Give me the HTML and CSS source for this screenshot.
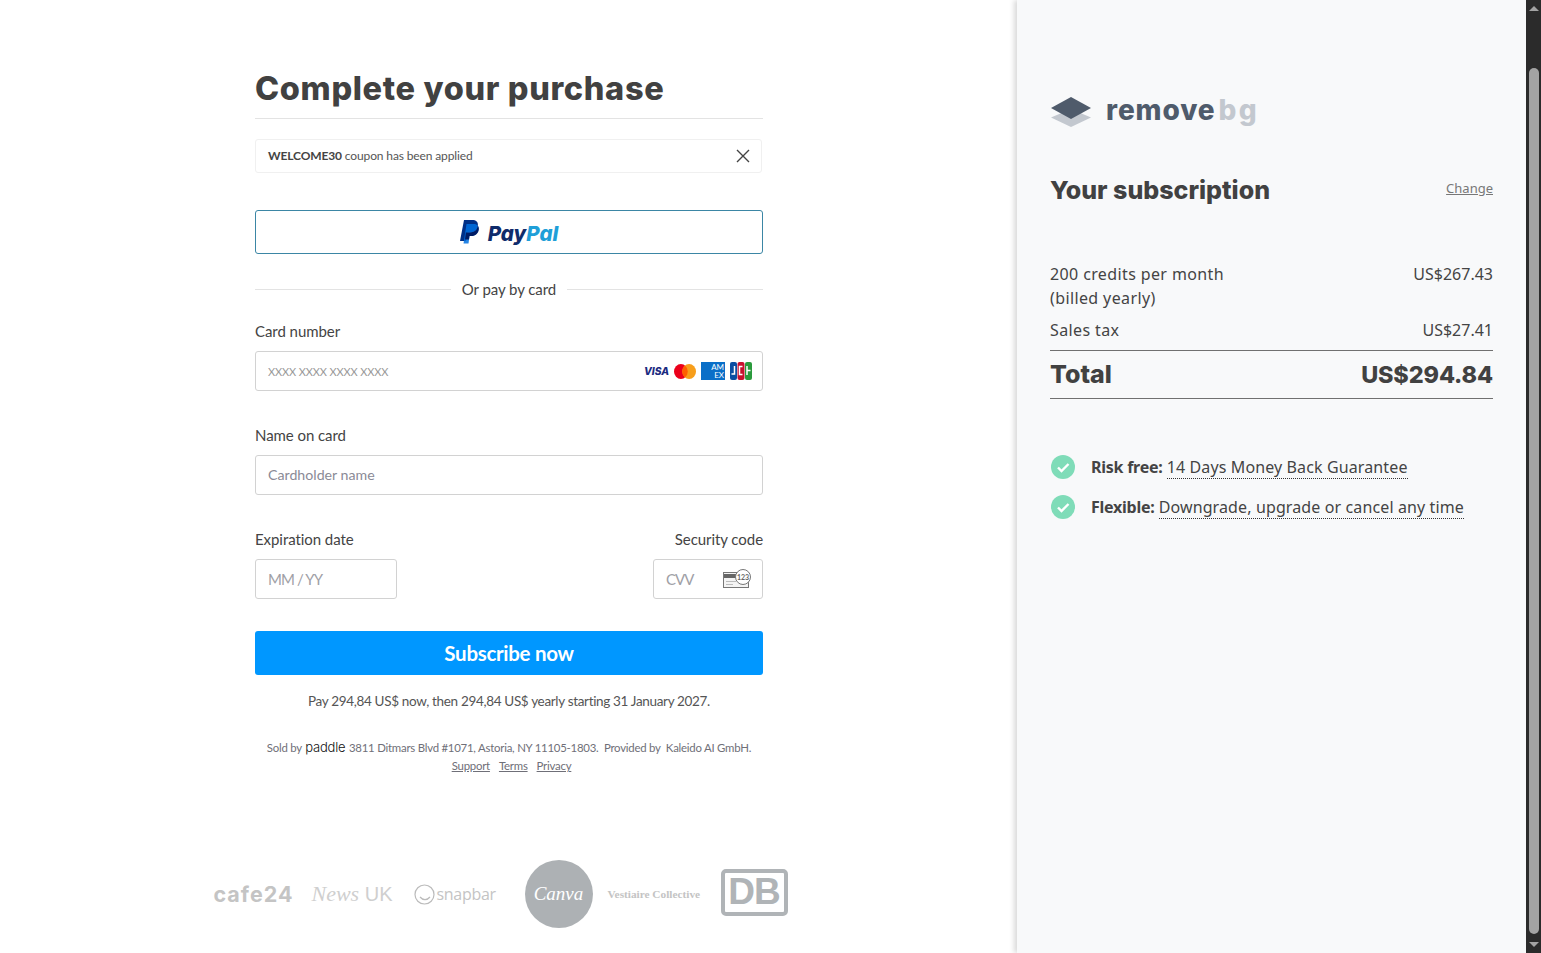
FILE: index.html
```html
<!DOCTYPE html>
<html lang="en">

<head>
    <meta charset="UTF-8">
    <title>Complete your purchase</title>
    <link rel="stylesheet" href="styles.css">
</head>

<body>
    <div class="page">
        <main class="checkout">
            <div class="form-col">
                <h1>Complete your purchase</h1>

                <div class="coupon">
                    <span><b>WELCOME30</b> coupon has been applied</span>
                    <svg class="coupon-close" width="14" height="14" viewBox="0 0 14 14">
                        <path d="M1 1L13 13M13 1L1 13" stroke="#444" stroke-width="1.4" fill="none" />
                    </svg>
                </div>

                <button class="paypal">
                    <svg width="20" height="24" viewBox="0 0 20 24">
                        <path d="M4 0h8c4 0 6.500 2 5.800 5.800C17 10.500 14 12.500 10 12.500H7.500L6 21H0z" fill="#003087" />
                        <path d="M6.500 4h7c3.500 0 5.500 2 5 5.500C18 13.500 15 16 11.500 16H9.500L8.500 23.500H3.500z" fill="#0070e0" opacity="0.85" />
                        <path d="M5.900 12.500h4.100c4 0 7-2 7.800-6.700.8 1 1.200 2.200 1 3.700-.5 4-3.500 6.500-7.300 6.500H9.500l-.5 3.500H5z" fill="#001c64" />
                    </svg>
                    <span class="paypal-word"><span class="pay">Pay</span><span class="pal">Pal</span></span>
                </button>

                <div class="divider"><span>Or pay by card</span></div>

                <div class="field">
                    <label>Card number</label>
                    <div class="input card-input">
                        <span class="ph ph-small">XXXX XXXX XXXX XXXX</span>
                        <div class="card-logos">
                            <span class="visa">VISA</span>
                            <svg width="22" height="15" viewBox="0 0 24 15" preserveAspectRatio="none">
                                <circle cx="7.500" cy="7.500" r="7.500" fill="#eb001b" />
                                <circle cx="16.500" cy="7.500" r="7.500" fill="#f79e1b" />
                                <path d="M12 1.500a7.500 7.500 0 0 1 0 12a7.500 7.500 0 0 1 0-12z" fill="#ff5f00" />
                            </svg>
                            <span class="amex">AM<br>EX</span>
                            <svg width="22" height="18" viewBox="0 0 22 18">
                                <rect x="0" y="0" width="7" height="18" rx="2" fill="#0b4ea2" />
                                <rect x="7.500" y="0" width="7" height="18" rx="2" fill="#c8102e" />
                                <rect x="15" y="0" width="7" height="18" rx="2" fill="#2a9a3c" />
                                <path d="M4.500 4v8H1.500M12.500 4.500H9.500v8H12.500M17 4v9M17 8.500h3.500" stroke="#fff" stroke-width="1.500" fill="none" />
                            </svg>
                        </div>
                    </div>
                </div>

                <div class="field">
                    <label>Name on card</label>
                    <div class="input"><span class="ph">Cardholder name</span></div>
                </div>

                <div class="field-row">
                    <div class="field expiry">
                        <label>Expiration date</label>
                        <div class="input"><span class="ph ph-dim">MM / YY</span></div>
                    </div>
                    <div class="field cvv">
                        <label>Security code</label>
                        <div class="input cvv-input">
                            <span class="ph ph-dim">CVV</span>
                            <svg width="28" height="20" viewBox="0 0 28 20">
                                <rect x="0.500" y="3.500" width="25" height="15" fill="#f4f4f4" stroke="#777" />
                                <rect x="1" y="5" width="24" height="4" fill="#666" />
                                <rect x="3" y="12" width="10" height="1" fill="#bbb" />
                                <rect x="3" y="15" width="7" height="1" fill="#bbb" />
                                <circle cx="20" cy="8" r="7.500" fill="#fff" stroke="#777" />
                                <text class="cvv-digits" x="20" y="10.500">123</text>
                            </svg>
                        </div>
                    </div>
                </div>

                <button class="subscribe">Subscribe now</button>

                <p class="pay-note">Pay 294,84 US$ now, then 294,84 US$ yearly starting 31 January 2027.</p>

                <div class="legal">
                    <div class="legal-line">Sold by <span class="paddle">paddle</span> 3811 Ditmars Blvd #1071, Astoria, NY 11105-1803. &nbsp;Provided by &nbsp;Kaleido AI GmbH.</div>
                    <div class="legal-links">
                        <a href="#">Support</a>
                        <a href="#">Terms</a>
                        <a href="#">Privacy</a>
                    </div>
                </div>
            </div>

            <div class="brands">
                <span class="brand-cafe">cafe24</span>
                <span class="brand-news"><i>News</i> UK</span>
                <span class="brand-snap">
                    <svg width="21" height="21" viewBox="0 0 21 21">
                        <circle cx="10.500" cy="10.500" r="9.500" fill="none" stroke="#bbb" stroke-width="1.200" />
                        <path d="M6 13c3 3.500 7 3.500 10 0" fill="none" stroke="#bbb" stroke-width="1.200" />
                    </svg>
                    snapbar
                </span>
                <span class="brand-canva">Canva</span>
                <span class="brand-vest">Vestiaire Collective</span>
                <span class="brand-db">DB</span>
            </div>
        </main>

        <aside class="summary">
            <div class="logo">
                <svg width="42" height="32" viewBox="0 0 42 32">
                    <path d="M21 13L41 21.500 21 31 1 21.500z" fill="#c3c8cf" />
                    <path d="M21 1L41 12 21 23 1 12z" fill="#4f5b6b" />
                </svg>
                <span class="logo-text"><span class="logo-remove">remove</span><span class="logo-bg">bg</span></span>
            </div>

            <div class="sub-head">
                <h2>Your subscription</h2>
                <a href="#">Change</a>
            </div>

            <div class="line line-first">
                <span class="line-name">200 credits per month<br>(billed yearly)</span>
                <span>US$267.43</span>
            </div>
            <div class="line line-tax">
                <span class="line-name">Sales tax</span>
                <span>US$27.41</span>
            </div>
            <div class="total">
                <span>Total</span>
                <span class="total-price">US$294.84</span>
            </div>

            <ul class="perks">
                <li>
                    <svg width="24" height="24" viewBox="0 0 24 24">
                        <circle cx="12" cy="12" r="12" fill="#7fdcb8" />
                        <path d="M7 12.500l3.500 3.500L17.500 9" fill="none" stroke="#fff" stroke-width="2.400" />
                    </svg>
                    <span><b>Risk free:</b> <span class="dotted dotted-short">14 Days Money Back Guarantee</span></span>
                </li>
                <li>
                    <svg width="24" height="24" viewBox="0 0 24 24">
                        <circle cx="12" cy="12" r="12" fill="#7fdcb8" />
                        <path d="M7 12.500l3.500 3.500L17.500 9" fill="none" stroke="#fff" stroke-width="2.400" />
                    </svg>
                    <span><b>Flexible:</b> <span class="dotted">Downgrade, upgrade or cancel any time</span></span>
                </li>
            </ul>
        </aside>

        <div class="scrollbar" aria-hidden="true">
            <div class="arrow-up"></div>
            <div class="thumb"></div>
            <div class="arrow-down"></div>
        </div>
    </div>
</body>

</html>
```

FILE: styles.css
```css
* {
    box-sizing: border-box;
}

body {
    margin: 0;
    background-color: #fff;
    color: #444;
    font-family: "Lato", sans-serif;
    overflow: hidden;
}

.page {
    display: flex;
    height: 953px;
    overflow: hidden;
}

/* left column */
.checkout {
    width: 1017px;
    display: flex;
    flex-direction: column;
    align-items: center;
}

.form-col {
    width: 508px;
    margin-left: 1px;
    padding-top: 68px;
}

h1 {
    margin: 0 0 20px;
    height: 51px;
    border-bottom: 1px solid #e3e3e3;
    font-family: "Inter", sans-serif;
    font-size: 32.500px;
    font-weight: 800;
    line-height: 41px;
    letter-spacing: 0.650px;
    color: #414141;
}

.coupon {
    display: flex;
    justify-content: space-between;
    align-items: center;
    height: 34px;
    padding: 0 11px 0 12px;
    border: 1px solid #f0f0f0;
    border-radius: 3px;
    font-size: 12px;
    letter-spacing: -0.130px;
    color: #555;
    margin-right: 1px;
}

.coupon span {
    margin-top: -2px;
}

.coupon b {
    font-weight: 700;
    color: #444;
}

.paypal {
    display: flex;
    justify-content: center;
    align-items: center;
    gap: 8px;
    width: 100%;
    height: 44px;
    margin-top: 37px;
    background-color: #fff;
    border: 1px solid #3b86a5;
    border-radius: 3px;
    padding: 0;
}

.paypal-word {
    font-family: "Inter", sans-serif;
    font-size: 20.500px;
    font-weight: 800;
    font-style: italic;
    padding-top: 2px;
}

.pay {
    color: #0f2c6b;
}

.pal {
    color: #1f9fd8;
}

.divider {
    display: flex;
    align-items: center;
    gap: 11px;
    margin-top: 25px;
    height: 20px;
    font-size: 15px;
    letter-spacing: -0.070px;
    color: #444;
}

.divider::before,
.divider::after {
    content: "";
    flex: 1;
    height: 1px;
    background-color: #e3e3e3;
}

.field {
    margin-top: 22px;
}

.field + .field {
    margin-top: 34px;
}

.field label {
    display: block;
    height: 20px;
    margin-bottom: 10px;
    font-size: 15px;
    line-height: 20px;
    letter-spacing: -0.060px;
    color: #444;
}

.input {
    display: flex;
    align-items: center;
    height: 40px;
    padding: 0 12px;
    border: 1px solid #d2d2d2;
    border-radius: 3px;
    background-color: #fff;
}

.ph {
    font-size: 14.200px;
    color: #8a8a96;
    margin-top: -1px;
}

.ph-small {
    font-size: 11px;
    letter-spacing: -0.120px;
    color: #999;
    margin-top: 0;
}

.ph-dim {
    font-size: 15px;
    letter-spacing: -0.900px;
    color: #a0a0a6;
    margin-top: 0;
}

.card-input {
    justify-content: space-between;
    padding-right: 10px;
}

.card-logos {
    display: flex;
    align-items: center;
    gap: 5px;
}

.visa {
    font-family: "Inter", sans-serif;
    font-size: 10.200px;
    font-weight: 800;
    font-style: italic;
    color: #1a2a80;
}

.amex {
    width: 24px;
    height: 18px;
    padding: 1px 1px 0 0;
    background-color: #0a6fc8;
    color: #fff;
    font-size: 8px;
    line-height: 8px;
    text-align: right;
}

.field-row {
    display: flex;
    justify-content: space-between;
    margin-top: 34px;
}

.field-row .field {
    margin-top: 0;
}

.expiry {
    width: 142px;
}

.cvv {
    width: 110px;
}

.cvv label {
    text-align: right;
    white-space: nowrap;
}

.cvv-input {
    justify-content: space-between;
    padding-right: 11px;
}

.cvv-digits {
    font-family: "Lato", sans-serif;
    font-size: 7px;
    font-weight: 700;
    text-anchor: middle;
    fill: #666;
}

.subscribe {
    display: block;
    width: 100%;
    height: 44px;
    margin-top: 32px;
    background-color: #0097ff;
    border: 0;
    border-radius: 3px;
    font-family: "Lato", sans-serif;
    font-size: 20.500px;
    font-weight: 700;
    letter-spacing: -0.300px;
    color: #fff;
}

.pay-note {
    margin: 17px 0 0;
    font-size: 13.500px;
    line-height: 18px;
    letter-spacing: -0.330px;
    text-align: center;
    color: #555;
}

.legal {
    margin-top: 28px;
    font-size: 11.400px;
    line-height: 18px;
    letter-spacing: -0.230px;
    text-align: center;
    color: #6f6f78;
}

.legal-line {
    white-space: nowrap;
}

.paddle {
    font-family: "Inter", sans-serif;
    font-size: 13px;
    font-weight: 300;
    color: #111;
    margin: 0 1px;
}

.legal-links {
    display: flex;
    justify-content: center;
    gap: 9px;
    margin-left: 5px;
}

.legal-links a {
    color: #6f6f78;
}

/* customer logos */
.brands {
    display: flex;
    align-items: center;
    height: 68px;
    margin-top: 85px;
    margin-right: 16px;
    color: #c4c4c4;
}

.brand-cafe {
    width: 98px;
    font-family: "Inter", sans-serif;
    font-size: 21.500px;
    font-weight: 700;
    letter-spacing: 1px;
}

.brand-news {
    width: 102px;
    font-family: "Liberation Sans", sans-serif;
    font-size: 20px;
    color: #cfcfcf;
    white-space: nowrap;
}

.brand-news i {
    font-family: "Liberation Serif", serif;
    font-size: 22px;
}

.brand-snap {
    display: flex;
    align-items: center;
    gap: 2px;
    width: 111px;
    font-size: 16px;
    letter-spacing: -0.300px;
    font-family: "Open Sans", sans-serif;
}

.brand-canva {
    display: flex;
    justify-content: center;
    align-items: center;
    width: 68px;
    height: 68px;
    margin-right: 15px;
    border-radius: 50%;
    background-color: #adb1b4;
    color: #fff;
    font-family: "Liberation Serif", serif;
    font-size: 19px;
    font-style: italic;
}

.brand-vest {
    width: 113px;
    font-family: "Liberation Serif", serif;
    font-size: 11.300px;
    font-weight: 700;
    white-space: nowrap;
}

.brand-db {
    display: flex;
    justify-content: center;
    align-items: center;
    width: 67px;
    height: 47px;
    margin-bottom: 4px;
    border: 4px solid #b0b4b7;
    border-radius: 5px;
    color: #b0b4b7;
    font-family: "Liberation Sans", sans-serif;
    font-size: 37px;
    font-weight: 700;
    letter-spacing: -1px;
}

/* right column */
.summary {
    width: 509px;
    padding: 96px 33px 0;
    background-color: #f8f9fa;
    box-shadow: -3px 0 5px rgba(0, 0, 0, 0.15);
    color: #444;
    font-family: "Noto Sans", sans-serif;
    font-size: 16px;
}

.logo {
    display: flex;
    align-items: center;
    gap: 14px;
    height: 32px;
}

.logo-text {
    font-family: "Inter", sans-serif;
    font-size: 28px;
    font-weight: 800;
    line-height: 30px;
    letter-spacing: 0.900px;
    margin-top: -4px;
}

.logo-remove {
    color: #4f5b6b;
}

.logo-bg {
    margin-left: 3px;
    letter-spacing: 2.200px;
    color: #c3c8cf;
}

.sub-head {
    display: flex;
    justify-content: space-between;
    align-items: center;
    height: 34px;
    margin-top: 45px;
}

h2 {
    margin: 0;
    font-family: "Inter", sans-serif;
    font-size: 25px;
    font-weight: 800;
    color: #414141;
}

.sub-head a {
    font-size: 13px;
    color: #777;
    margin-top: -4px;
}

.line {
    display: flex;
    justify-content: space-between;
    line-height: 24px;
}

.line-name {
    letter-spacing: 0.380px;
}

.line-first {
    margin-top: 55px;
}

.line-tax {
    margin-top: 8px;
    padding-bottom: 8px;
    border-bottom: 1px solid #707070;
}

.total {
    display: flex;
    justify-content: space-between;
    align-items: center;
    height: 48px;
    padding-bottom: 2px;
    border-bottom: 1px solid #707070;
    font-family: "Inter", sans-serif;
    font-size: 25px;
    font-weight: 800;
    color: #414141;
}

.total-price {
    margin-top: 1px;
    font-size: 23.400px;
    letter-spacing: -0.100px;
}

.perks {
    list-style: none;
    margin: 56px 0 0 1px;
    padding: 0;
}

.perks li {
    display: flex;
    align-items: center;
    gap: 16px;
    height: 24px;
    margin-bottom: 16px;
}

.perks b {
    font-weight: 700;
    letter-spacing: -0.250px;
}

.dotted {
    border-bottom: 1px dotted #333;
    letter-spacing: 0.120px;
}

.dotted-short {
    letter-spacing: 0.120px;
}

/* browser scrollbar from the screenshot */
.scrollbar {
    position: relative;
    width: 15px;
    background-color: #2b2b2b;
}

.thumb {
    position: absolute;
    top: 68px;
    left: 3px;
    width: 10px;
    height: 866px;
    background-color: #a3a3a3;
    border-radius: 5px;
}

.arrow-up,
.arrow-down {
    position: absolute;
    left: 3px;
    width: 0;
    height: 0;
    border-left: 5px solid transparent;
    border-right: 5px solid transparent;
}

.arrow-up {
    top: 6px;
    border-bottom: 5px solid #a3a3a3;
}

.arrow-down {
    bottom: 6px;
    border-top: 5px solid #a3a3a3;
}
```
